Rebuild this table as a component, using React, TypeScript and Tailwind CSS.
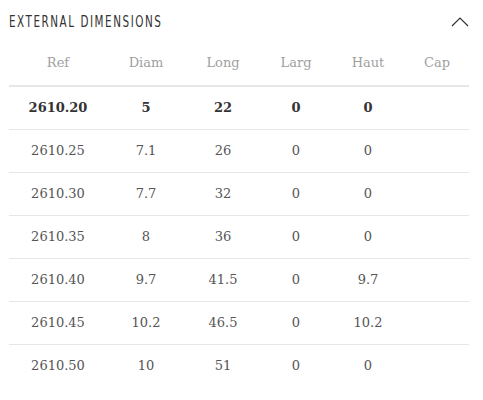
import React from 'react'

const rows = [
  ['2610.20', '5', '22', '0', '0', ''],
  ['2610.25', '7.1', '26', '0', '0', ''],
  ['2610.30', '7.7', '32', '0', '0', ''],
  ['2610.35', '8', '36', '0', '0', ''],
  ['2610.40', '9.7', '41.5', '0', '9.7', ''],
  ['2610.45', '10.2', '46.5', '0', '10.2', ''],
  ['2610.50', '10', '51', '0', '0', ''],
]

const headers = ['Ref', 'Diam', 'Long', 'Larg', 'Haut', 'Cap']
const widths = ['w-[98px]', 'w-[78px]', 'w-[76px]', 'w-[70px]', 'w-[74px]', 'w-[64px]']

const App = () => {
  return (
    <div className="w-[483px] h-[400px] bg-white pl-[9px] pr-[14px]">
      <div className="flex items-center justify-between h-[42px] pt-[2px]">
        <h3
          className="inline-block origin-left scale-x-[0.77] text-[15px] tracking-[2px] text-[#333] font-normal whitespace-nowrap"
          style={{ fontFamily: '"DejaVu Sans Condensed", "DejaVu Sans", sans-serif' }}
        >
          EXTERNAL DIMENSIONS
        </h3>
        <svg width="18" height="10" viewBox="0 0 18 10" className="mt-[-1px]">
          <path d="M1 9 L9 1 L17 9" fill="none" stroke="#333" strokeWidth="1.2" />
        </svg>
      </div>
      <table
        className="w-full table-fixed border-collapse text-[13px]"
        style={{ fontFamily: '"DejaVu Serif", "Liberation Serif", serif' }}
      >
        <colgroup>
          {widths.map((w, i) => (
            <col key={i} className={w} />
          ))}
        </colgroup>
        <thead>
          <tr className="h-[44px] border-b-2 border-[#e6e6e6]">
            {headers.map(h => (
              <th key={h} className="font-normal text-[#a0a0a0] text-center align-middle pb-[1px]">
                {h}
              </th>
            ))}
          </tr>
        </thead>
        <tbody>
          {rows.map((r, i) => (
            <tr
              key={r[0]}
              className={`h-[43px] ${i < rows.length - 1 ? 'border-b border-[#e6e6e6]' : ''}`}
            >
              {r.map((c, j) => (
                <td
                  key={j}
                  className={`text-center align-middle ${i === 0 ? 'font-bold text-[#333]' : 'text-[#555]'}`}
                >
                  {c}
                </td>
              ))}
            </tr>
          ))}
        </tbody>
      </table>
    </div>
  )
}

export default App
